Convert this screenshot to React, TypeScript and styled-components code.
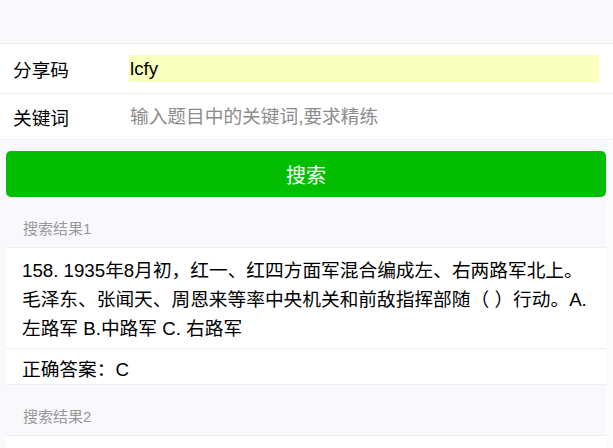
import React from "react";
import styled, { createGlobalStyle } from "styled-components";

const GlobalStyle = createGlobalStyle`
  html, body {
    margin: 0;
    padding: 0;
    background: #fcfbfe;
  }
  body {
    font-family: "Liberation Sans", "Noto Sans CJK SC", sans-serif;
    color: #000;
  }
  * { box-sizing: border-box; }
`;

const Page = styled.div`
  width: 613px;
  overflow: hidden;
`;

const TopSpace = styled.div`
  height: 44px;
  background: #f9f8fd;
  border-bottom: 1px solid #efeff3;
`;

const Form = styled.div`
  background: #fff;
  border-bottom: 1px solid #efeff3;
`;

const FormRow = styled.div<{ $height: number }>`
  display: flex;
  align-items: center;
  height: ${(p) => p.$height}px;
  padding: 0 14px 0 13px;

  & + & {
    border-top: 1px solid #efeff3;
  }
`;

const FieldLabel = styled.span`
  width: 116px;
  flex-shrink: 0;
  font-size: 18.7px;
`;

const Field = styled.input<{ $filled?: boolean }>`
  flex: 1;
  height: 27px;
  border: 0;
  outline: none;
  padding: 0 1px;
  font-family: inherit;
  font-size: 18.7px;
  color: #000;
  background: ${(p) => (p.$filled ? "#faffbd" : "transparent")};

  &::placeholder {
    color: #8c8c8c;
  }
`;

const Results = styled.div`
  background: #f9f8fd;
  margin-right: 7px;
  padding: 11px 0 0 6px;
`;

const SearchButton = styled.button`
  display: block;
  width: 100%;
  height: 46px;
  border: 0;
  border-radius: 5px;
  background: #04be02;
  color: #fff;
  font-family: inherit;
  font-size: 20px;
  cursor: pointer;
`;

const SectionTitle = styled.div`
  padding: 22px 17px 8px;
  font-size: 15px;
  line-height: 20px;
  color: #999;
`;

const Card = styled.div`
  background: #fff;
  border-top: 1px solid #efeff3;
  border-bottom: 1px solid #efeff3;
`;

const Cell = styled.div<{ $pad: string }>`
  padding: ${(p) => p.$pad};
  font-size: 18.7px;
  line-height: 29px;

  & + & {
    border-top: 1px solid #efeff3;
  }
`;

interface ResultData {
  question: string;
  answer: string;
}

const results: ResultData[] = [
  {
    question:
      "158. 1935年8月初，红一、红四方面军混合编成左、右两路军北上。毛泽东、张闻天、周恩来等率中央机关和前敌指挥部随（ ）行动。A. 左路军 B.中路军 C. 右路军",
    answer: "C",
  },
  {
    question:
      "159. 1935年9月，毛泽东、周恩来率红一、三军团和军委纵队先行北上，到达甘肃迭部县的俄界。A. 俄界 B. 哈达铺 C. 吴起镇",
    answer: "A",
  },
];

const ResultItem = ({ index, data }: { index: number; data: ResultData }) => (
  <>
    <SectionTitle>搜索结果{index}</SectionTitle>
    <Card>
      <Cell $pad="8px 12px 5px 16px">{data.question}</Cell>
      <Cell $pad="6px 12px 0 16px">正确答案：{data.answer}</Cell>
    </Card>
  </>
);

export default function App() {
  return (
    <Page>
      <GlobalStyle />
      <TopSpace />
      <Form>
        <FormRow $height={49}>
          <FieldLabel>分享码</FieldLabel>
          <Field $filled defaultValue="lcfy" />
        </FormRow>
        <FormRow $height={46}>
          <FieldLabel>关键词</FieldLabel>
          <Field placeholder="输入题目中的关键词,要求精练" />
        </FormRow>
      </Form>
      <Results>
        <SearchButton>搜索</SearchButton>
        {results.map((r, i) => (
          <ResultItem key={i} index={i + 1} data={r} />
        ))}
      </Results>
    </Page>
  );
}
